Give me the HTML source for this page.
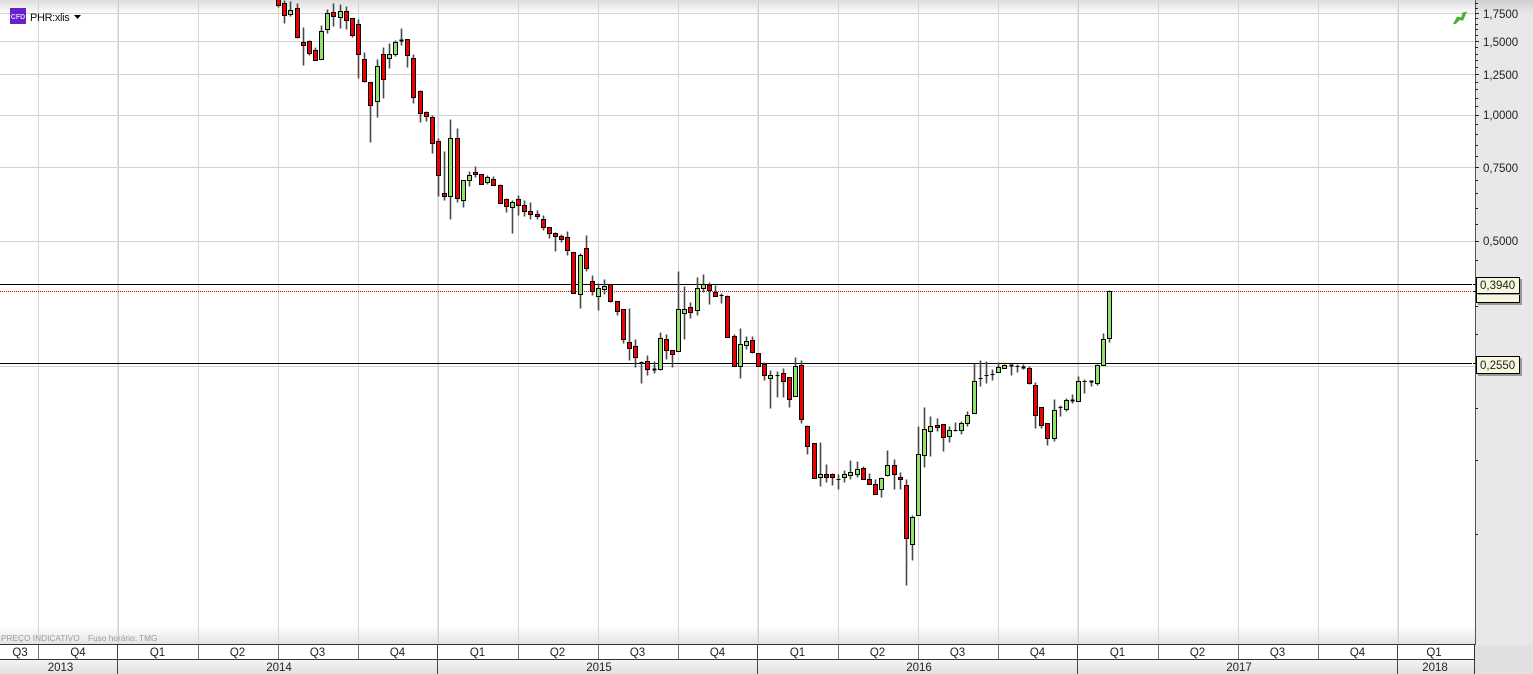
<!DOCTYPE html>
<html><head><meta charset="utf-8"><style>
html,body{margin:0;padding:0;background:#fff}
body{width:1533px;height:674px;overflow:hidden;position:relative}
svg{position:absolute;left:0;top:0;display:block}
text{font-family:"Liberation Sans",sans-serif;font-size:11.5px;fill:#222}
</style></head><body>
<svg width="1533" height="674" viewBox="0 0 1533 674" xmlns="http://www.w3.org/2000/svg">
<defs>
<linearGradient id="t" x1="0" y1="0" x2="0" y2="1"><stop offset="0" stop-color="#dcdcdc"/><stop offset="1" stop-color="#fff"/></linearGradient>
<linearGradient id="b" x1="0" y1="0" x2="0" y2="1"><stop offset="0" stop-color="#fff"/><stop offset="1" stop-color="#e2e2e2"/></linearGradient>
<linearGradient id="y" x1="0" y1="0" x2="0" y2="1"><stop offset="0" stop-color="#f6f6f6"/><stop offset="1" stop-color="#e0e0e0"/></linearGradient>
<linearGradient id="r" x1="0" y1="0" x2="0" y2="1"><stop offset="0" stop-color="#cfcfcf"/><stop offset="1" stop-color="#e8e8e8"/></linearGradient>
</defs>
<rect width="1533" height="674" fill="#fff"/>
<rect x="0" y="0" width="1475" height="14" fill="url(#t)"/>
<rect x="0" y="626" width="1475" height="19" fill="url(#b)"/>
<rect x="1475" y="0" width="58" height="674" fill="#e8e8e8"/>
<rect x="1475" y="0" width="58" height="14" fill="url(#r)"/>
<rect x="1475" y="645" width="58" height="29" fill="#e0e0e0"/>
<!-- grid -->
<path d="M0 13.5H1475M0 41.5H1475M0 74.5H1475M0 115.5H1475M0 167.5H1475M0 241.5H1475M0 366.5H1475" stroke="#d2d2d2" fill="none"/>
<path d="M38.5 0V645M198.5 0V645M278.5 0V645M358.5 0V645M518.5 0V645M598.5 0V645M678.5 0V645M838.5 0V645M918.5 0V645M998.5 0V645M1158.5 0V645M1238.5 0V645M1318.5 0V645" stroke="#d6d6d6" fill="none"/>
<path d="M117.5 0V645M437.5 0V645M757.5 0V645M1077.5 0V645M1397.5 0V645" stroke="#e4e4e4" fill="none"/>
<path d="M118.5 0V645M438.5 0V645M758.5 0V645M1078.5 0V645M1398.5 0V645" stroke="#d0d0d0" fill="none"/>
<text x="1" y="641" style="font-size:8.3px;fill:#9a9a9a">PREÇO INDICATIVO</text>
<text x="88" y="641" style="font-size:8.3px;fill:#9a9a9a">Fuso horário: TMG</text>
<!-- level lines -->
<path d="M0 284.5H1472M0 363.5H1472" stroke="#000" fill="none"/>
<path d="M0 291.5H1472" stroke="#d00000" stroke-dasharray="1 1" fill="none"/>
<!-- candles -->
<g transform="translate(.5 .5)">
<path fill="none" stroke="#4a4a4a" stroke-width="1.6" d="M278 0V7M284 0V23M290 1V16M297 3V38M303 27V65M309 40V55M315 47V60M321 25V59M327 9V33M333 3V26M340 4V28M346 6V29M352 18V37M358 19V78M364 52V82M370 82V142M377 59V117M383 47V98M389 43V68M395 40V56M401 28V45M407 39V67M413 54V103M420 90V122M426 111V121M432 115V153M438 138V196M444 151V200M450 119V219M457 128V202M463 180V207M469 171V186M475 166V177M481 174V184M487 175V184M493 176V185M500 184V203M506 198V212M512 200V233M518 195V215M524 200V216M530 202V219M537 210V219M543 215V230M549 227V238M555 232V251M561 234V242M567 231V255M573 252V293M580 253V308M586 235V271M592 275V295M598 283V310M604 279V294M610 284V302M617 301V315M623 309V343M629 308V360M635 339V367M641 361V383M647 355V375M654 361V373M660 332V370M666 334V359M672 350V367M678 271V351M684 286V339M690 302V318M697 277V315M703 274V292M709 282V304M715 285V296M721 293V303M727 295V337M734 334V366M740 328V378M746 336V349M752 336V353M758 353V366M764 362V380M770 370V408M777 371V397M783 368V397M789 377V407M795 357V396M801 360V423M807 425V454M814 443V478M820 442V486M826 464V482M832 473V485M838 474V489M844 470V482M850 460V479M857 461V477M863 466V479M869 473V484M875 479V494M881 477V497M887 450V476M894 459V489M900 472V489M906 479V585M912 515V560M918 426V515M924 407V467M930 416V456M937 418V431M943 424V451M949 426V442M955 422V431M961 421V434M967 411V426M974 363V413M980 360V386M986 361V383M992 369V380M998 362V372M1004 364V368M1011 364V375M1017 364V372M1023 364V369M1029 366V384M1035 382V428M1041 407V428M1047 423V445M1054 399V441M1060 405V416M1066 398V411M1072 394V403M1078 376V401M1084 379V393M1091 380V386M1097 364V385M1103 333V365M1109 290V342"/>
<g shape-rendering="crispEdges" stroke="#000" stroke-width="1">
<path fill="#f00000" d="M276 -1h4V5h-4zM282 3h4V15h-4zM295 8h4V37h-4zM301 42h4V45h-4zM307 41h4V53h-4zM313 50h4V60h-4zM331 12h4V16h-4zM344 11h4V20h-4zM350 18h4V35h-4zM356 24h4V54h-4zM362 59h4V81h-4zM368 82h4V105h-4zM381 54h4V79h-4zM405 39h4V55h-4zM411 58h4V97h-4zM418 91h4V113h-4zM424 112h4V116h-4zM430 117h4V143h-4zM436 141h4V175h-4zM442 193h4V196h-4zM455 138h4V198h-4zM473 172h4V174h-4zM479 174h4V184h-4zM491 179h4V185h-4zM498 185h4V203h-4zM504 199h4V206h-4zM516 199h4V205h-4zM522 205h4V211h-4zM528 211h4V214h-4zM535 214h4V216h-4zM541 219h4V227h-4zM547 227h4V233h-4zM553 233h4V236h-4zM559 236h4V239h-4zM565 237h4V250h-4zM571 252h4V293h-4zM584 248h4V268h-4zM590 281h4V291h-4zM608 284h4V301h-4zM615 301h4V311h-4zM621 309h4V339h-4zM627 342h4V348h-4zM633 346h4V357h-4zM645 361h4V369h-4zM664 339h4V350h-4zM670 350h4V354h-4zM688 307h4V312h-4zM707 285h4V290h-4zM713 292h4V296h-4zM725 296h4V337h-4zM732 336h4V366h-4zM750 340h4V352h-4zM756 353h4V366h-4zM762 364h4V375h-4zM781 373h4V381h-4zM787 377h4V399h-4zM799 365h4V419h-4zM805 426h4V446h-4zM812 443h4V478h-4zM824 474h4V477h-4zM830 474h4V477h-4zM861 468h4V479h-4zM867 479h4V484h-4zM873 484h4V494h-4zM892 465h4V474h-4zM898 477h4V479h-4zM904 485h4V538h-4zM935 425h4V427h-4zM941 424h4V437h-4zM1027 368h4V383h-4zM1033 385h4V415h-4zM1039 407h4V425h-4zM1045 423h4V438h-4z"/>
<path fill="#90e26a" d="M288 10h4V14h-4zM319 31h4V59h-4zM325 13h4V29h-4zM338 11h4V17h-4zM375 66h4V101h-4zM387 54h4V58h-4zM393 42h4V54h-4zM448 138h4V196h-4zM461 180h4V200h-4zM467 175h4V180h-4zM485 177h4V182h-4zM510 202h4V207h-4zM578 255h4V294h-4zM596 288h4V296h-4zM602 286h4V289h-4zM658 338h4V369h-4zM676 309h4V351h-4zM682 309h4V313h-4zM695 288h4V310h-4zM701 284h4V288h-4zM738 344h4V366h-4zM744 341h4V345h-4zM768 375h4V378h-4zM793 366h4V396h-4zM818 474h4V477h-4zM842 474h4V477h-4zM848 472h4V475h-4zM855 469h4V474h-4zM879 478h4V489h-4zM885 465h4V475h-4zM910 517h4V544h-4zM916 454h4V515h-4zM922 429h4V455h-4zM928 426h4V431h-4zM947 430h4V436h-4zM959 423h4V430h-4zM965 415h4V423h-4zM972 381h4V413h-4zM996 367h4V372h-4zM1002 365h4V368h-4zM1052 410h4V438h-4zM1064 400h4V409h-4zM1076 381h4V401h-4zM1095 365h4V383h-4zM1101 339h4V365h-4zM1107 291h4V338h-4z"/>
<path fill="none" d="M719 295h4M775 375h4M836 479h4M953 430h4M978 378h4M984 375h4M990 374h4M1015 366h4M1058 407h4M1082 381h4M639 362h4"/>
<path fill="none" stroke-width="2" d="M399 40h4M652 369h4M1009 365h4M1021 367h4M1070 400h4M1089 381h4"/>
</g>
</g>
<!-- bottom bars -->
<rect x="0" y="645" width="1475" height="14" fill="#fff"/>
<rect x="0" y="659" width="1475" height="15" fill="url(#y)"/>
<path d="M0 644.5H1475M0 659.5H1475" stroke="#333" fill="none"/>
<path d="M38.5 645V659M198.5 645V659M278.5 645V659M358.5 645V659M518.5 645V659M598.5 645V659M678.5 645V659M838.5 645V659M918.5 645V659M998.5 645V659M1158.5 645V659M1238.5 645V659M1318.5 645V659" stroke="#777" fill="none"/>
<path d="M117.5 645V674M437.5 645V674M757.5 645V674M1077.5 645V674M1397.5 645V674" stroke="#444" fill="none"/>
<path d="M1474.5 644V674" stroke="#333" fill="none"/>
<g text-anchor="middle">
<text x="20" y="656">Q3</text><text x="78" y="656">Q4</text><text x="157.5" y="656">Q1</text><text x="237.5" y="656">Q2</text><text x="317.5" y="656">Q3</text><text x="397.5" y="656">Q4</text><text x="477.5" y="656">Q1</text><text x="557.5" y="656">Q2</text><text x="637.5" y="656">Q3</text><text x="717.5" y="656">Q4</text><text x="797.5" y="656">Q1</text><text x="877.5" y="656">Q2</text><text x="957.5" y="656">Q3</text><text x="1037.5" y="656">Q4</text><text x="1117.5" y="656">Q1</text><text x="1197.5" y="656">Q2</text><text x="1277.5" y="656">Q3</text><text x="1357.5" y="656">Q4</text><text x="1434" y="656">Q1</text>
<text x="60.5" y="671">2013</text><text x="279" y="671">2014</text><text x="599" y="671">2015</text><text x="919" y="671">2016</text><text x="1239" y="671">2017</text><text x="1435" y="671">2018</text>
</g>
<!-- axis -->
<path d="M1475.5 0V645" stroke="#555" fill="none"/>
<path fill="none" stroke="#222" d="M1475 3.5h3M1475 8.5h3M1475 13.5h4M1475 18.5h3M1475 24.5h3M1475 29.5h3M1475 35.5h3M1475 41.5h4M1475 47.5h3M1475 54.5h3M1475 60.5h3M1475 67.5h3M1475 74.5h4M1475 82.5h3M1475 89.5h3M1475 98.5h3M1475 106.5h3M1475 115.5h4M1475 124.5h3M1475 134.5h3M1475 145.5h3M1475 156.5h3M1475 167.5h4M1475 180.5h3M1475 193.5h3M1475 208.5h3M1475 224.5h3M1475 241.5h4M1475 260.5h3M1475 306.5h3M1475 334.5h3M1475 408.5h3M1475 460.5h3M1475 534.5h3"/>
<text x="1483" y="18">1,7500</text><text x="1483" y="46">1,5000</text><text x="1483" y="79">1,2500</text><text x="1483" y="119">1,0000</text><text x="1483" y="172">0,7500</text><text x="1483" y="245">0,5000</text>
<!-- labels -->
<rect x="1478" y="281" width="44" height="24" fill="#999"/>
<rect x="1476.5" y="279.5" width="43" height="23" fill="#f7f7df" stroke="#000"/>
<rect x="1478" y="279" width="44" height="16" fill="#999"/>
<rect x="1476.5" y="277.5" width="43" height="16" fill="#f7f7df" stroke="#000"/>
<text x="1480" y="289">0,3940</text>
<rect x="1478" y="358" width="44" height="18" fill="#999"/>
<rect x="1476.5" y="356.5" width="43" height="17" fill="#f7f7df" stroke="#000"/>
<text x="1480" y="369">0,2550</text>
<path d="M1473 284.5h3M1473 291.5h3M1473 363.5h3" stroke="#000" fill="none"/>
<!-- trend icon -->
<path d="M1453 24L1457 16.7L1461.3 17.3L1462.3 12.7L1467 11.5L1463 20.7L1459.7 20L1455.7 24Z" fill="#44b42a"/>
<!-- symbol -->
<rect x="10" y="8" width="16" height="16" fill="#6a20c8"/>
<text x="18" y="19" text-anchor="middle" style="font-size:7px;font-weight:bold;fill:#d8d0ff">CFD</text>
<text x="30" y="21" style="font-size:11px;letter-spacing:-.35px;fill:#111">PHR:xlis</text>
<path d="M74 15h7l-3.5 4z" fill="#000"/>
</svg>
</body></html>
